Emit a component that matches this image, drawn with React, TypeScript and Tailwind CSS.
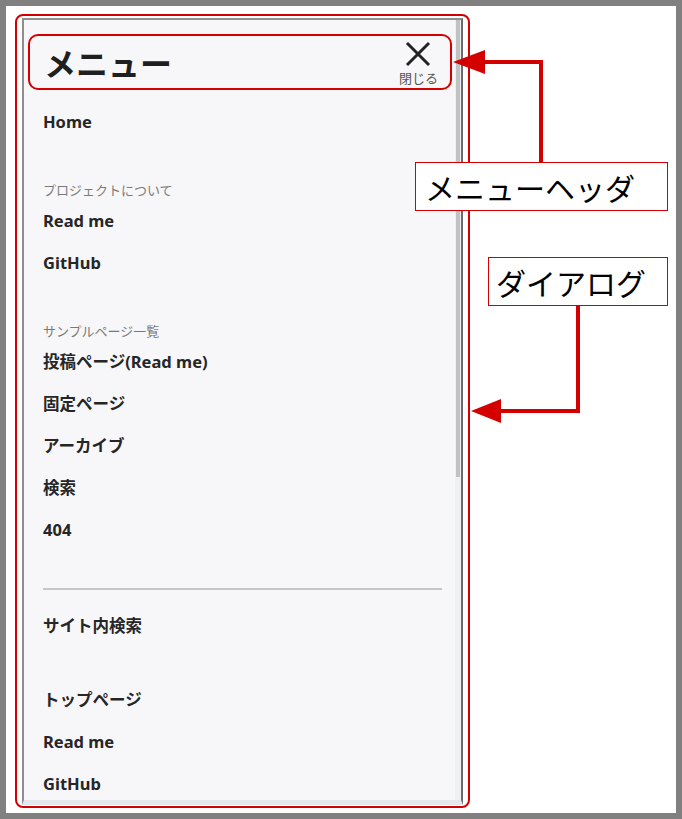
import React from 'react';

const sans = { fontFamily: '"Noto Sans", "Noto Sans CJK JP", sans-serif' };
const jp = { fontFamily: '"Noto Sans CJK JP", sans-serif' };

const Item = ({ label }: { label: string }) => (
  <div className="h-[42px] flex items-center text-[16.5px] font-bold text-[#262626]">{label}</div>
);

const Heading = ({ label, className = '' }: { label: string; className?: string }) => (
  <div className={`h-[19px] flex items-center text-[13px] text-[#7a7a7a] ${className}`}>{label}</div>
);

const Label = ({ text, className }: { text: string; className: string }) => (
  <div
    className={`absolute h-[49px] flex items-center bg-white border-[1.5px] border-[#d40000] text-[30px] text-black leading-none ${className}`}
    style={jp}
  >
    {text}
  </div>
);

export default function App() {
  return (
    <div className="relative w-[682px] h-[819px] bg-[#808080] p-[6px]" style={sans}>
      <div className="w-full h-full bg-white pt-[8px] pl-[9px]">
        {/* annotation frame round the dialog */}
        <div className="w-[455px] h-[794px] border-2 border-[#d40000] rounded-[8px] px-[5px] pt-[2px] pb-[1px]">
          <div className="h-full flex bg-[#f7f7f9] border-t-2 border-l-2 border-[#8f8f8f] border-r-2 border-r-[#6a6a6a] border-b-[5px] border-b-[#e3e7ee] overflow-hidden">
            <div className="flex-1 min-w-0 overflow-hidden">
              <div className="mt-[14px] ml-[4px] mr-[3px] h-[56px] border-2 border-[#d40000] rounded-[10px] flex items-center justify-between pl-[14px] pr-[12px]">
                <h2 className="text-[32px] font-bold text-[#1f1f1f] leading-none" style={jp}>メニュー</h2>
                <button className="flex flex-col items-center text-[#555]">
                  <svg width="26" height="26" viewBox="0 0 26 26" fill="none">
                    <path d="M2 2 24 24M24 2 2 24" stroke="#222" strokeWidth="3" />
                  </svg>
                  <span className="mt-[4px] text-[13px] leading-none" style={jp}>閉じる</span>
                </button>
              </div>

              <nav className="pl-[19px] pr-[13px] mt-[11px]">
                <Item label="Home" />

                <Heading label="プロジェクトについて" className="mt-[38px]" />
                <Item label="Read me" />
                <Item label="GitHub" />

                <Heading label="サンプルページ一覧" className="mt-[38px]" />
                <Item label="投稿ページ(Read me)" />
                <Item label="固定ページ" />
                <Item label="アーカイブ" />
                <Item label="検索" />
                <Item label="404" />

                <hr className="mt-[37px] border-0 border-t-2 border-[#c6c6c8]" />

                <div className="mt-[15px]">
                  <Item label="サイト内検索" />
                </div>

                <div className="mt-[32px]">
                  <Item label="トップページ" />
                  <Item label="Read me" />
                  <Item label="GitHub" />
                </div>
              </nav>
            </div>

            {/* scrollbar */}
            <div className="w-[6px] bg-[#eef0f3] flex justify-center">
              <div className="w-[4px] h-[457px] bg-[#c1c1c1]" />
            </div>
          </div>
        </div>
      </div>

      {/* callout arrows */}
      <svg className="absolute left-0 top-0" width="682" height="819" viewBox="0 0 682 819" fill="none">
        <path d="M484 62H541V162" stroke="#d40000" strokeWidth="4" />
        <polygon points="453,62 485,50 485,74" fill="#d40000" />
        <path d="M578 306V411H499" stroke="#d40000" strokeWidth="4" />
        <polygon points="471,411 501,399 501,423" fill="#d40000" />
      </svg>

      <Label text="メニューヘッダ" className="left-[415px] top-[162px] w-[253px] pl-[9px]" />
      <Label text="ダイアログ" className="left-[488px] top-[257px] w-[180px] pl-[7px]" />
    </div>
  );
}
